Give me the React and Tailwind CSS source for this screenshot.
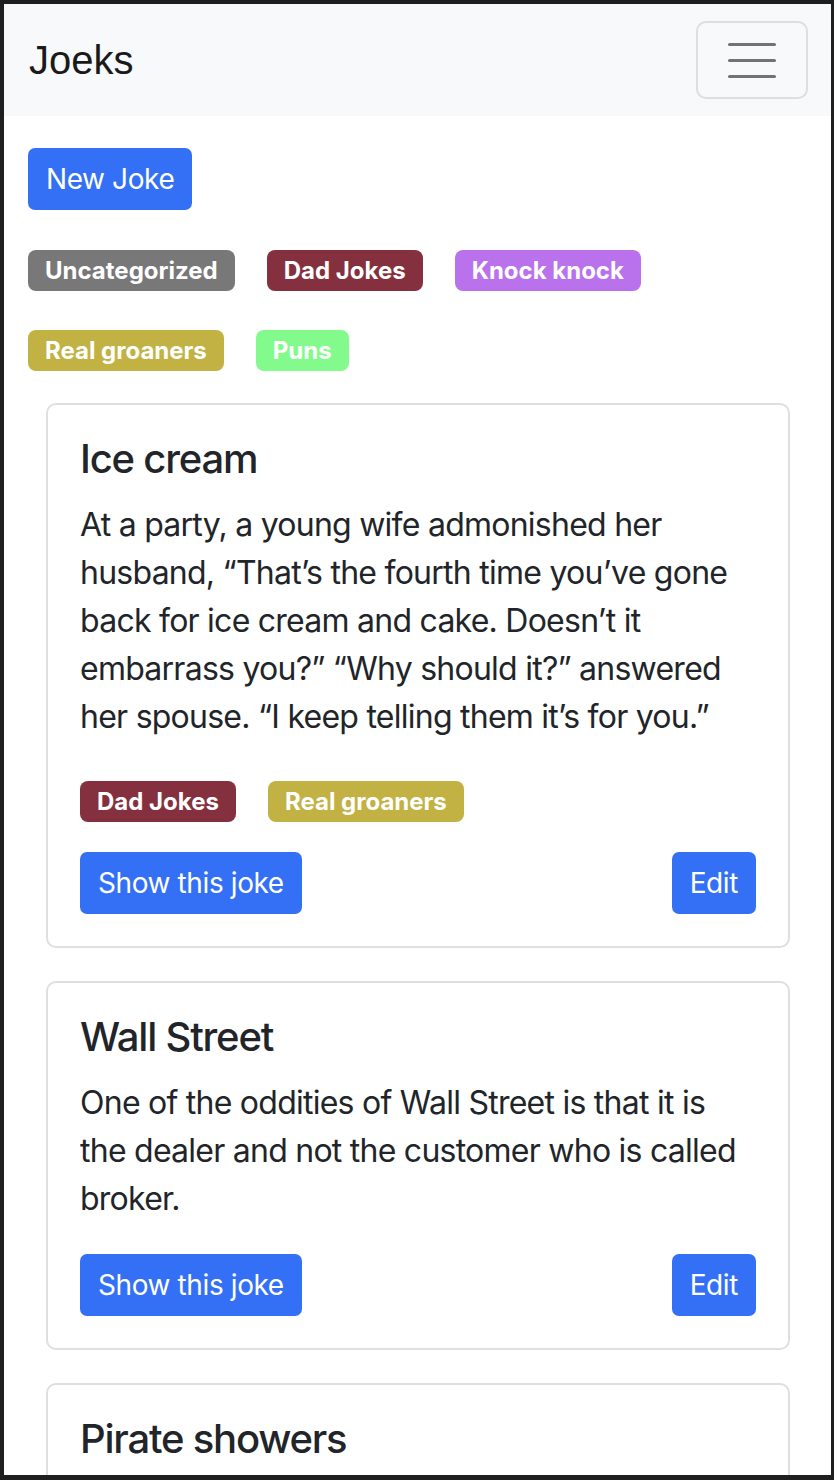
import React from "react";

const FONT = { fontFamily: "Inter, 'Noto Sans', sans-serif" };

const badgeColors = {
  Uncategorized: "bg-[#787878]",
  "Dad Jokes": "bg-[#84303e]",
  "Knock knock": "bg-[#b972ec]",
  "Real groaners": "bg-[#c2b244]",
  Puns: "bg-[#83fa8c]",
};

function Badge({ name }) {
  return (
    <span
      className={`inline-flex items-center h-[41px] px-[17px] rounded-[8px] text-white text-[24px] font-bold leading-none ${badgeColors[name]}`}
    >
      {name}
    </span>
  );
}

function Btn({ children }) {
  return (
    <button className="h-[62px] px-[18px] rounded-[7px] bg-[#3470f6] text-white text-[28px] leading-[42px] tracking-[-0.4px]">
      {children}
    </button>
  );
}

function Card({ title, text, badges }) {
  return (
    <div className="ml-[18px] mr-[17px] mb-[33px] border-2 border-[#dfdfdf] rounded-[10px] px-[32px] pt-[30px] pb-[32px]">
      <h5 className="text-[40px] leading-[48px] font-medium tracking-[-1.2px] text-[#212529] mb-[18px]">{title}</h5>
      <p className="text-[32px] leading-[48px] tracking-[-0.75px] text-[#212529]">{text}</p>
      {badges && badges.length > 0 ? (
        <div className="flex gap-[32px] mt-[40px]">
          {badges.map((b) => (
            <Badge key={b} name={b} />
          ))}
        </div>
      ) : null}
      <div className={`flex justify-between ${badges ? "mt-[30px]" : "mt-[31px]"}`}>
        <Btn>Show this joke</Btn>
        <Btn>Edit</Btn>
      </div>
    </div>
  );
}

export default function App() {
  return (
    <div className="w-[834px] h-[1480px] bg-[#1f1f1f] pt-[4px] pl-[4px] pr-[3px] pb-[5px]" style={FONT}>
      <div className="w-full h-full bg-white overflow-hidden">
        <nav className="h-[112px] bg-[#f8f9fa] flex items-center justify-between pl-[25px] pr-[23px]">
          <span
            className="text-[40px] leading-none text-[#1a1a1a]"
            style={{ fontFamily: "'Liberation Sans', Arial, sans-serif" }}
          >
            Joeks
          </span>
          <button className="w-[112px] h-[78px] border-2 border-[#dedede] rounded-[10px] flex flex-col items-center justify-center gap-[13px]">
            <span className="block w-[48px] h-[3px] rounded-full bg-[#737373]"></span>
            <span className="block w-[48px] h-[3px] rounded-full bg-[#737373]"></span>
            <span className="block w-[48px] h-[3px] rounded-full bg-[#737373]"></span>
          </button>
        </nav>
        <main className="px-[24px]">
          <div className="mt-[32px]">
            <Btn>New Joke</Btn>
          </div>
          <div className="mt-[40px] flex flex-wrap gap-x-[32px] gap-y-[39px]">
            {["Uncategorized", "Dad Jokes", "Knock knock", "Real groaners", "Puns"].map((b) => (
              <Badge key={b} name={b} />
            ))}
          </div>
          <div className="mt-[32px]">
            <Card
              title="Ice cream"
              text="At a party, a young wife admonished her husband, “That’s the fourth time you’ve gone back for ice cream and cake. Doesn’t it embarrass you?” “Why should it?” answered her spouse. “I keep telling them it’s for you.”"
              badges={["Dad Jokes", "Real groaners"]}
            />
            <Card
              title="Wall Street"
              text="One of the oddities of Wall Street is that it is the dealer and not the customer who is called broker."
            />
            <Card title="Pirate showers" text="Why couldn’t the pirate take a shower? Because he was too busy hunting for treasure." />
          </div>
        </main>
      </div>
    </div>
  );
}
